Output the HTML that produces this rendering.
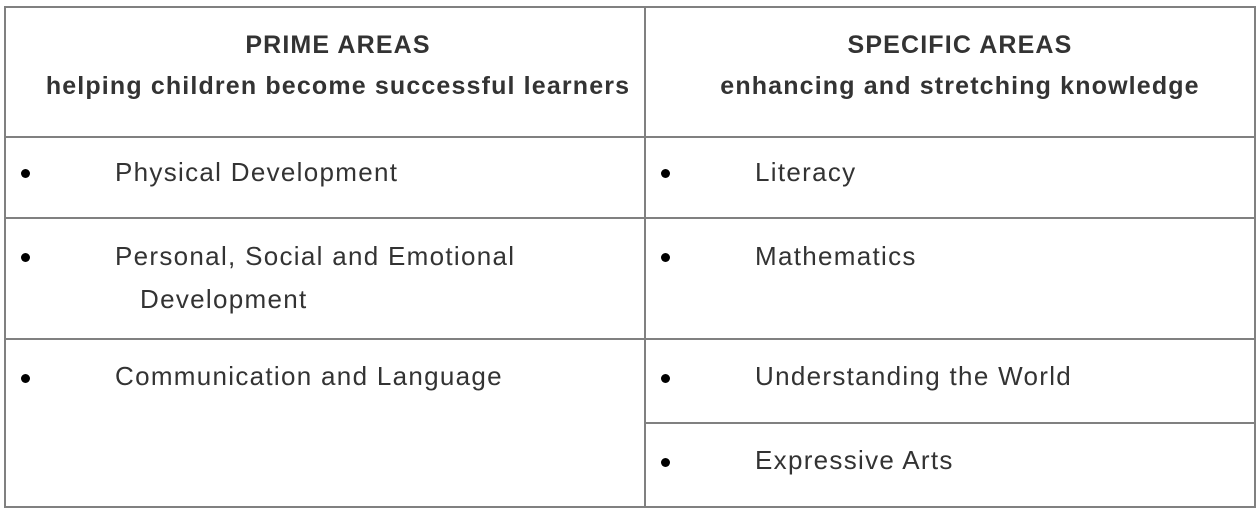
<!DOCTYPE html>
<html><head><style>
body{margin:0;width:1260px;height:518px;background:#fff;font-family:"Liberation Sans",Arial,sans-serif;color:#333;position:relative;overflow:hidden}
.l{position:absolute;background:#808080}
.t{position:absolute;font-size:26px;line-height:30px;white-space:nowrap;letter-spacing:1.3px}
.b{font-weight:bold;text-align:center;width:640px;font-size:25px;letter-spacing:1.15px}
.d{position:absolute;width:9px;height:9px;border-radius:50%;background:#000}
</style></head><body>
<div class="l" style="left:4px;top:6px;width:1252px;height:2px"></div>
<div class="l" style="left:4px;top:506px;width:1252px;height:2px"></div>
<div class="l" style="left:4px;top:6px;width:2px;height:502px"></div>
<div class="l" style="left:1254px;top:6px;width:2px;height:502px"></div>
<div class="l" style="left:644px;top:6px;width:2px;height:502px"></div>
<div class="l" style="left:4px;top:136px;width:1252px;height:2px"></div>
<div class="l" style="left:4px;top:217px;width:1252px;height:2px"></div>
<div class="l" style="left:4px;top:338px;width:1252px;height:2px"></div>
<div class="l" style="left:644px;top:422px;width:612px;height:2px"></div>

<div class="t b" style="left:18px;top:30px">PRIME AREAS</div>
<div class="t b" style="left:18px;top:71px">helping children become successful learners</div>
<div class="t b" style="left:640px;top:30px">SPECIFIC AREAS</div>
<div class="t b" style="left:640px;top:71px">enhancing and stretching knowledge</div>

<div class="d" style="left:21px;top:169px"></div>
<div class="t" style="left:115px;top:157px">Physical Development</div>
<div class="d" style="left:21px;top:253px"></div>
<div class="t" style="left:115px;top:241px">Personal, Social and Emotional</div>
<div class="t" style="left:140px;top:284px">Development</div>
<div class="d" style="left:21px;top:374px"></div>
<div class="t" style="left:115px;top:361px">Communication and Language</div>

<div class="d" style="left:661px;top:169px"></div>
<div class="t" style="left:755px;top:157px">Literacy</div>
<div class="d" style="left:661px;top:253px"></div>
<div class="t" style="left:755px;top:241px">Mathematics</div>
<div class="d" style="left:661px;top:374px"></div>
<div class="t" style="left:755px;top:361px">Understanding the World</div>
<div class="d" style="left:661px;top:458px"></div>
<div class="t" style="left:755px;top:445px">Expressive Arts</div>
</body></html>
